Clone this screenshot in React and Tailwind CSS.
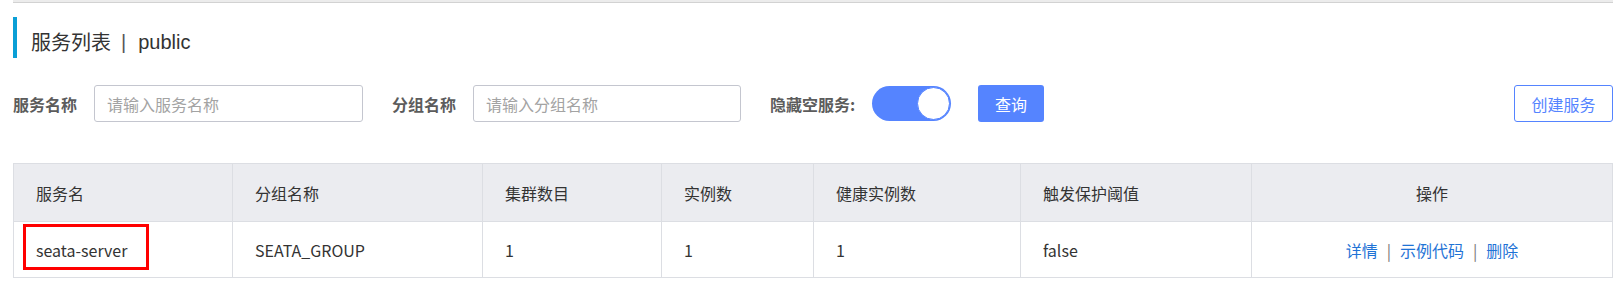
const font = { fontFamily: '"Noto Sans CJK SC", "Noto Sans", sans-serif' };

const columns = [
  { key: "name", label: "服务名", width: "w-[219px]" },
  { key: "group", label: "分组名称", width: "w-[250px]" },
  { key: "clusters", label: "集群数目", width: "w-[179px]" },
  { key: "instances", label: "实例数", width: "w-[152px]" },
  { key: "healthy", label: "健康实例数", width: "w-[207px]" },
  { key: "threshold", label: "触发保护阈值", width: "w-[231px]" },
];

const rows = [
  {
    name: "seata-server",
    group: "SEATA_GROUP",
    clusters: "1",
    instances: "1",
    healthy: "1",
    threshold: "false",
  },
];

function Toggle({ on }) {
  return (
    <div className="w-[79px] h-[35px] rounded-full bg-[#5584ff] flex items-center justify-end px-[1px]">
      {on && <div className="w-[33px] h-[33px] rounded-full bg-white border border-[#5584ff]" />}
    </div>
  );
}

export default function App() {
  return (
    <div className="w-[1624px] h-[290px] bg-white text-[#333] overflow-hidden" style={font}>
      <div className="ml-[13px] w-[1600px]">
        <div className="h-[3px] bg-[#ececec] border-b border-[#d2d2d2]" />

        <div className="mt-[14px] h-[41px] border-l-4 border-[#0a9fd6] pl-[14px] pt-[8px] flex items-center text-[20px] text-[#333]">
          <span>服务列表</span>
          <span className="ml-[10px] mr-[12px] text-[#555] font-['Liberation_Sans',sans-serif]">|</span>
          <span className="font-['Liberation_Sans',sans-serif]">public</span>
        </div>

        <div className="mt-[27px] h-[37px] flex items-center text-[16px]">
          <label className="w-[81px] font-bold text-[#5c5c5c]">服务名称</label>
          <input
            placeholder="请输入服务名称"
            className="w-[269px] h-[37px] border border-[#c4c6cf] rounded-[3px] px-[12px] text-[16px] placeholder:text-[#a3a3a3] outline-none"
          />
          <label className="ml-[29px] w-[81px] font-bold text-[#5c5c5c]">分组名称</label>
          <input
            placeholder="请输入分组名称"
            className="w-[268px] h-[37px] border border-[#c4c6cf] rounded-[3px] px-[12px] text-[16px] placeholder:text-[#a3a3a3] outline-none"
          />
          <label className="ml-[29px] w-[102px] font-bold text-[#5c5c5c]">隐藏空服务:</label>
          <Toggle on />
          <button className="ml-[27px] w-[66px] h-[37px] rounded-[3px] bg-[#5584ff] text-white text-[16px]">
            查询
          </button>
          <button className="ml-auto w-[99px] h-[37px] rounded-[3px] border border-[#5584ff] bg-white text-[#5584ff] text-[16px]">
            创建服务
          </button>
        </div>

        <table className="mt-[41px] w-[1600px] border-collapse table-fixed text-[16px]">
          <thead>
            <tr className="h-[58px] bg-[#ebecf0]">
              {columns.map((c) => (
                <th
                  key={c.key}
                  className={`${c.width} border border-[#dcdee3] pl-[22px] text-left font-normal text-[#333]`}
                >
                  {c.label}
                </th>
              ))}
              <th className="border border-[#dcdee3] text-center font-normal text-[#333]">操作</th>
            </tr>
          </thead>
          <tbody>
            {rows.map((r) => (
              <tr key={r.name} className="h-[56px]">
                {columns.map((c, i) => (
                  <td key={c.key} className="relative border border-[#dcdee3] pl-[22px] text-[#333]">
                    {r[c.key]}
                    {i === 0 && (
                      <div className="absolute left-[9px] top-[2px] w-[126px] h-[46px] border-[3px] border-[#ff0000]" />
                    )}
                  </td>
                ))}
                <td className="border border-[#dcdee3] text-center">
                  <a className="text-[#1f73d6] cursor-pointer">详情</a>
                  <span className="mx-[9px] text-[#777]">|</span>
                  <a className="text-[#1f73d6] cursor-pointer">示例代码</a>
                  <span className="mx-[9px] text-[#777]">|</span>
                  <a className="text-[#1f73d6] cursor-pointer">删除</a>
                </td>
              </tr>
            ))}
          </tbody>
        </table>
      </div>
    </div>
  );
}
